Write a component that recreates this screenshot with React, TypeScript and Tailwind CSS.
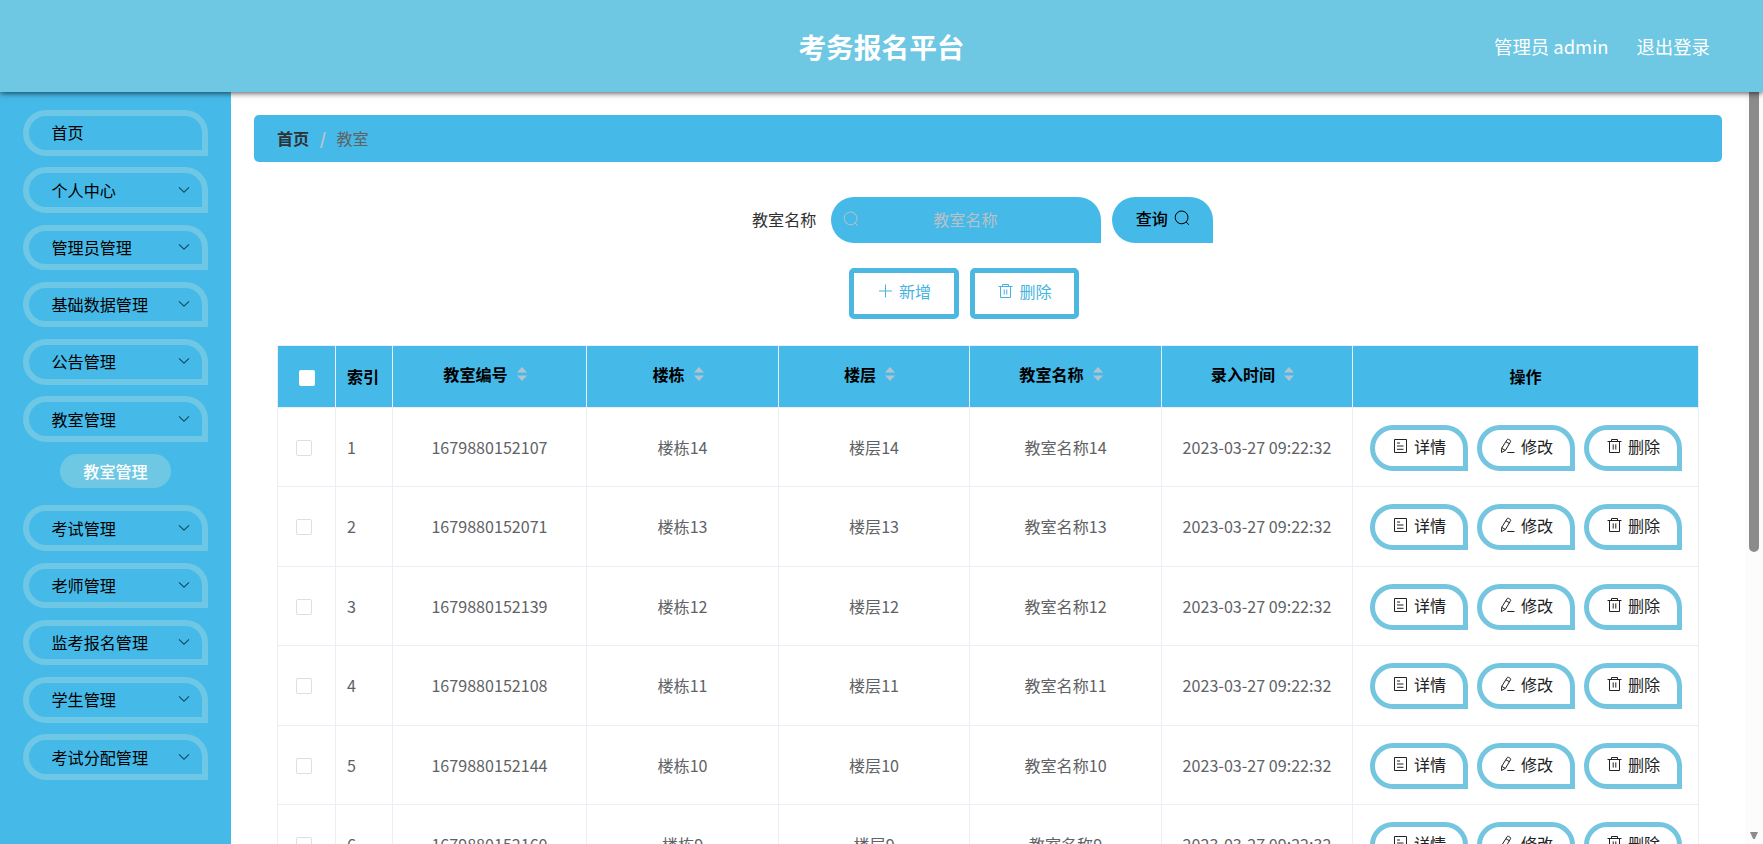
import type { ReactNode } from 'react';

const menus = [
  { name: '首页', leaf: true },
  { name: '个人中心' },
  { name: '管理员管理' },
  { name: '基础数据管理' },
  { name: '公告管理' },
  { name: '教室管理', child: '教室管理' },
  { name: '考试管理' },
  { name: '老师管理' },
  { name: '监考报名管理' },
  { name: '学生管理' },
  { name: '考试分配管理' },
];

const columns = ['教室编号', '楼栋', '楼层', '教室名称', '录入时间'];

const rows = [
  { id: 1, code: '1679880152107', no: 14 },
  { id: 2, code: '1679880152071', no: 13 },
  { id: 3, code: '1679880152139', no: 12 },
  { id: 4, code: '1679880152108', no: 11 },
  { id: 5, code: '1679880152144', no: 10 },
  { id: 6, code: '1679880152160', no: 9 },
];

const time = '2023-03-27 09:22:32';

const gridCols = 'grid grid-cols-[58px_57px_194px_192px_191px_192px_191px_346px]';

const Icon = ({ children, className = '' }: { children: ReactNode; className?: string }) => (
  <svg
    viewBox="0 0 16 16"
    className={`size-4 shrink-0 ${className}`}
    fill="none"
    stroke="currentColor"
    strokeWidth="1"
  >
    {children}
  </svg>
);

const SearchIcon = ({ className }: { className?: string }) => (
  <Icon className={className}>
    <circle cx="7.6" cy="7.4" r="6.4" />
    <path d="M12.2 12l2.6 2.8" />
  </Icon>
);

const PlusIcon = () => (
  <Icon>
    <path d="M8.5 1.5v13M2 8h13" />
  </Icon>
);

const TrashIcon = () => (
  <Icon>
    <path d="M1.5 3.5h14M3.5 3.5v11h10v-11M5.5 3.5v-2h6v2M7.2 6.4v5.2M9.8 6.4v5.2" />
  </Icon>
);

const TicketsIcon = () => (
  <Icon>
    <path d="M2.5 1.5h12v13h-12zM5 5h3M5 8h6.5M5 11.3h6.5" />
  </Icon>
);

const EditIcon = () => (
  <Icon>
    <path d="M8.2 1.6q.5-.7 1.2-.3l2 1.2q.6.4.2 1.1l-5.2 8.8-3.9 2.1.2-4.2zM7 3.8l3.5 2M2.7 10.3l3.7 2.1M8.3 14.5h7.2" />
  </Icon>
);

const Arrow = () => (
  <svg viewBox="0 0 12 8" className="w-3 h-2" fill="none" stroke="#174a63" strokeWidth="1.1">
    <path d="M1 1.4l5 4.8 5-4.8" />
  </svg>
);

const Sort = () => (
  <svg viewBox="0 0 10 14" className="ml-[9px] mr-[9px] w-[10px] h-[14px]" fill="#b4c4cf">
    <path d="M5 0l5 5.5H0zM5 14l5-5.5H0z" />
  </svg>
);

const RowButton = ({ icon, label }: { icon: ReactNode; label: string }) => (
  <button className="flex h-[46px] w-[98px] items-center justify-center gap-[6px] rounded-[23px] rounded-br-none border-[5px] border-[#74c5df] bg-white pb-[4px] pl-px text-[#222]">
    {icon}
    {label}
  </button>
);

const Sidebar = () => (
  <aside className="w-[231px] shrink-0 bg-[#45bae8] pl-[23px] pt-[18px] text-black">
    {menus.map((m) => (
      <div key={m.name}>
        <div className="mb-[11.8px] flex h-[45.5px] w-[185px] items-center justify-between rounded-[23px] rounded-br-none border-[6px] border-[#6ec8e5] pb-px pl-[22.5px] pr-[12px]">
          <span>{m.name}</span>
          {!m.leaf && <Arrow />}
        </div>
        {m.child && (
          <div className="mb-[17px] ml-[37px] flex h-[34.5px] w-[111px] items-center justify-center rounded-full bg-[#6ec8e3] pb-px font-medium text-white">
            {m.child}
          </div>
        )}
      </div>
    ))}
  </aside>
);

const Cell = ({ children, left }: { children: ReactNode; left?: boolean }) => (
  <div className={`flex items-center border-r border-[#ebeef5] ${left ? 'pl-[11px]' : 'justify-center'}`}>
    {children}
  </div>
);

const Table = () => (
  <div className="ml-[23px] w-[1422px] border-l border-t border-[#ebeef5]">
    <div className={`${gridCols} h-[62px] border-b border-[#ebeef5] bg-[#45bae8] font-bold text-black`}>
      <Cell>
        <span className="mt-[3px] size-[16px] rounded-[2px] bg-white" />
      </Cell>
      <Cell left>索引</Cell>
      {columns.map((c) => (
        <Cell key={c}>
          <span className="flex items-center pb-[5px]">
            {c}
            <Sort />
          </span>
        </Cell>
      ))}
      <Cell>操作</Cell>
    </div>
    {rows.map((r) => (
      <div key={r.id} className={`${gridCols} h-[79.5px] border-b border-[#ebeef5] text-[#606266]`}>
        <Cell>
          <span className="mr-[5px] mt-[2px] size-[16px] rounded-[2px] border border-[#dcdfe6] bg-white" />
        </Cell>
        <Cell left>{r.id}</Cell>
        <Cell>{r.code}</Cell>
        <Cell>楼栋{r.no}</Cell>
        <Cell>楼层{r.no}</Cell>
        <Cell>教室名称{r.no}</Cell>
        <Cell>{time}</Cell>
        <Cell>
          <div className="flex gap-[9px] pt-[2px]">
            <RowButton icon={<TicketsIcon />} label="详情" />
            <RowButton icon={<EditIcon />} label="修改" />
            <RowButton icon={<TrashIcon />} label="删除" />
          </div>
        </Cell>
      </div>
    ))}
  </div>
);

export default function App() {
  return (
    <div className="flex h-[844px] w-[1763px] flex-col overflow-hidden bg-white font-['Noto_Sans_CJK_SC',sans-serif] text-[16.1px] leading-6">
      <header className="relative z-10 flex h-[92px] shrink-0 items-center justify-center bg-[#6ec8e3] text-white shadow-[0_1px_6px_rgba(0,0,0,0.7)]">
        <h1 className="pb-px text-[27.7px] font-bold">考务报名平台</h1>
        <div className="absolute right-[53px] flex gap-[28px] pb-px text-[18.4px]">
          <span>管理员 admin</span>
          <span>退出登录</span>
        </div>
      </header>

      <div className="flex min-h-0 flex-1">
        <Sidebar />

        <main className="w-[1514px] shrink-0 overflow-hidden pl-[23px] pt-[23px]">
          {/* 面包屑 */}
          <div className="flex h-[46.5px] w-[1468px] items-center rounded-[5px] bg-[#45bae8] pl-[23px]">
            <span className="font-bold text-[#303133]">首页</span>
            <span className="mx-[10.5px] font-bold text-[#c0c4cc]">/</span>
            <span className="text-[#606266]">教室</span>
          </div>

          {/* 搜索 */}
          <div className="mt-[35px] flex h-[46px] w-[1468px] items-center pl-[498px]">
            <label className="pb-px text-[#303133]">教室名称</label>
            <div className="relative ml-[15px] flex h-[46px] w-[270px] items-center justify-center rounded-[23px] rounded-br-none bg-[#45bae8] pb-[2px] pr-[2px] text-[#b9c0c8]">
              <SearchIcon className="absolute left-[12px] top-[14px]" />
              教室名称
            </div>
            <button className="ml-[11px] flex h-[46px] w-[101px] items-center justify-center gap-[6px] rounded-[23px] rounded-br-none bg-[#45bae8] pb-[4px] font-medium text-black">
              查询
              <SearchIcon />
            </button>
          </div>

          <div className="mt-[25px] flex gap-[11px] pl-[595px] text-[#45b3de]">
            <button className="flex h-[51px] w-[110px] items-center justify-center gap-[6px] rounded-[5px] border-[5px] border-[#4cb8e2] pb-[4px]">
              <PlusIcon />
              新增
            </button>
            <button className="flex h-[51px] w-[109px] items-center justify-center gap-[6px] rounded-[5px] border-[5px] border-[#4cb8e2] pb-[4px]">
              <TrashIcon />
              删除
            </button>
          </div>

          <div className="mt-[26px]">
            <Table />
          </div>
        </main>

        {/* 滚动条 */}
        <div className="flex w-[18px] flex-col items-center justify-between bg-[#fcfcfc]">
          <div className="-ml-px h-[460px] w-[10px] rounded-b-[5px] bg-[#8b8b8b]" />
          <svg viewBox="0 0 8 7" className="mb-[5px] h-[7px] w-2" fill="#8b8b8b">
            <path d="M0 0h8L4.8 7H3.2z" />
          </svg>
        </div>
      </div>
    </div>
  );
}
